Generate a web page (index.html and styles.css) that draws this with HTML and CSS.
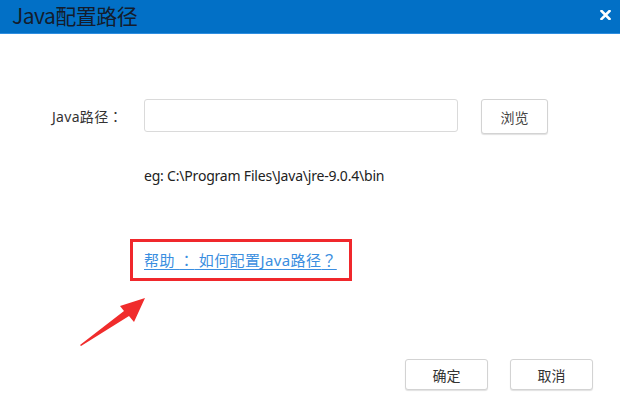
FILE: index.html
```html
<!DOCTYPE html>
<html lang="zh-CN">
<head>
<meta charset="utf-8">
<title>Java配置路径</title>
<link rel="stylesheet" href="styles.css">
</head>
<body>
<div class="dialog">
  <header class="titlebar">
    <span class="title">Java配置路径</span>
    <span class="close" aria-label="关闭">
      <svg width="11" height="10" viewBox="0 0 11 10"><path d="M1.5 1 L9.5 9 M9.5 1 L1.5 9" stroke="#fff" stroke-width="2.6" stroke-linecap="square" fill="none"/></svg>
    </span>
  </header>
  <main class="content">
    <div class="path-row">
      <label class="label" for="path">Java路径<span class="punct" lang="ja">：</span></label>
      <input id="path" class="input" type="text">
      <button class="btn browse" type="button">浏览</button>
    </div>
    <p class="example">eg: C:\Program Files\Java\jre-9.0.4\bin</p>
    <div class="help-box">
      <a class="help-link" href="#">帮助 <span class="punct" lang="ja">：</span> 如何配置Java路径<span class="punct" lang="ja">？</span></a>
    </div>
    <svg class="arrow" width="80" height="60" viewBox="0 0 80 60">
      <polygon points="10,57 54,23 50,18 75,10 64,34 59,28 11,58" fill="#f02c2c"/>
    </svg>
  </main>
  <footer class="actions">
    <button class="btn action" type="button">确定</button>
    <button class="btn action" type="button">取消</button>
  </footer>
</div>
</body>
</html>
```

FILE: styles.css
```css
* { box-sizing: border-box; }
html, body { margin: 0; padding: 0; background: #fff; }
body {
  width: 620px;
  height: 400px;
  overflow: hidden;
  font-family: "Noto Sans", "Noto Sans CJK SC", sans-serif;
  color: #333;
}
.dialog {
  width: 620px;
  height: 400px;
  display: flex;
  flex-direction: column;
}
.titlebar {
  height: 34px;
  background: #0270c6;
  border-bottom: 1px solid #2e8ee0;
  display: flex;
  align-items: center;
  justify-content: space-between;
  padding: 0 9px 0 12px;
  flex: none;
}
.title {
  font-family: "Noto Sans CJK SC", sans-serif;
  font-size: 21px;
  color: #141c2c;
  line-height: 1;
  margin-top: -2px;
  letter-spacing: -0.5px;
}
.close { display: flex; margin-top: -3px; }
.content {
  position: relative;
  flex: 1;
  padding: 63px 0 0 0;
  display: flex;
  flex-direction: column;
}
.path-row {
  display: flex;
  align-items: center;
  padding-left: 52px;
}
.label {
  width: 92px;
  font-size: 14px;
  color: #333;
  font-family: "Noto Sans", "Noto Sans CJK SC", sans-serif;
  letter-spacing: 0.3px;
}
.punct {
  font-family: "Noto Sans CJK JP", "Noto Sans CJK KR", sans-serif;
}
.input {
  width: 314px;
  height: 33px;
  border: 1px solid #dadada;
  border-radius: 3px;
  margin: 0;
  outline: none;
}
.btn {
  background: #fff;
  border: 1px solid #d3d3d3;
  border-radius: 3px;
  box-shadow: 0 1px 1px rgba(0,0,0,0.12);
  font-family: "Noto Sans CJK SC", sans-serif;
  font-size: 14px;
  color: #333;
  padding: 0;
}
.browse {
  width: 67px;
  height: 35px;
  margin-left: 23px;
  margin-top: 2px;
  color: #444;
}
.example {
  margin: 32px 0 0 144px;
  font-size: 14px;
  line-height: 20px;
  color: #222;
  letter-spacing: -0.2px;
}
.help-box {
  margin: 53px 0 0 130px;
  width: 222px;
  height: 42px;
  border: 3px solid #f0282c;
  display: flex;
  align-items: center;
  padding: 0 0 2px 11px;
}
.help-link {
  font-family: "Noto Sans", "Noto Sans CJK SC", sans-serif;
  font-size: 15px;
  color: #3a8ee0;
  text-decoration: underline;
  text-underline-offset: 3px;
  letter-spacing: 0.4px;
  white-space: nowrap;
}
.arrow {
  position: absolute;
  left: 70px;
  top: 254px;
}
.actions {
  flex: none;
  display: flex;
  justify-content: flex-end;
  gap: 22px;
  padding: 0 27px 10px 0;
}
.action {
  width: 83px;
  height: 31px;
}
```
